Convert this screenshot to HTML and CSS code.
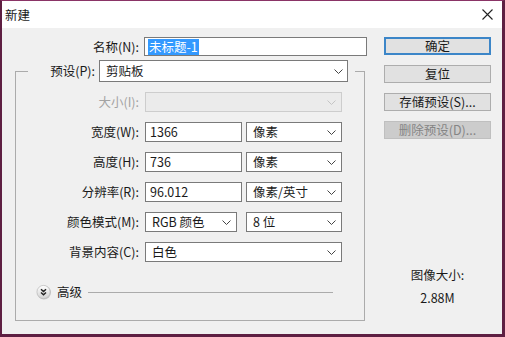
FILE: index.html
```html
<!DOCTYPE html>
<html lang="zh-CN">
<head>
    <meta charset="UTF-8">
    <title>新建</title>
    <link rel="stylesheet" href="styles.css">
</head>
<body>
    <div class="window">
        <div class="titlebar">
            <span class="title">新建</span>
            <svg class="close" width="11" height="11" viewBox="0 0 11 11">
                <path d="M0.5 0.5 L10.5 10.5 M10.5 0.5 L0.5 10.5" stroke="#222" stroke-width="1.1" fill="none"/>
            </svg>
        </div>

        <div class="content">
            <div class="main">
                <!-- nombre -->
                <div class="name-row">
                    <span class="label name-label">名称(N):</span>
                    <div class="field name-field"><span class="selected">未标题-1</span></div>
                </div>

                <fieldset class="group">
                    <legend>
                        <div class="legend-row">
                            <span class="label preset-label">预设(P):</span>
                            <div class="field select preset">
                                <span>剪贴板</span>
                                <svg class="chev" width="9" height="5" viewBox="0 0 9 5"><path d="M0.5 0.5 L4.5 4.5 L8.5 0.5" stroke="#444" fill="none"/></svg>
                            </div>
                        </div>
                    </legend>

                    <div class="row disabled">
                        <span class="label">大小(I):</span>
                        <div class="field select full off">
                            <span></span>
                            <svg class="chev" width="9" height="5" viewBox="0 0 9 5"><path d="M0.5 0.5 L4.5 4.5 L8.5 0.5" stroke="#c4c4c4" fill="none"/></svg>
                        </div>
                    </div>

                    <div class="row">
                        <span class="label">宽度(W):</span>
                        <div class="field num">1366</div>
                        <div class="field select unit">
                            <span>像素</span>
                            <svg class="chev" width="9" height="5" viewBox="0 0 9 5"><path d="M0.5 0.5 L4.5 4.5 L8.5 0.5" stroke="#444" fill="none"/></svg>
                        </div>
                    </div>

                    <div class="row">
                        <span class="label">高度(H):</span>
                        <div class="field num">736</div>
                        <div class="field select unit">
                            <span>像素</span>
                            <svg class="chev" width="9" height="5" viewBox="0 0 9 5"><path d="M0.5 0.5 L4.5 4.5 L8.5 0.5" stroke="#444" fill="none"/></svg>
                        </div>
                    </div>

                    <div class="row">
                        <span class="label">分辨率(R):</span>
                        <div class="field num">96.012</div>
                        <div class="field select unit">
                            <span>像素/英寸</span>
                            <svg class="chev" width="9" height="5" viewBox="0 0 9 5"><path d="M0.5 0.5 L4.5 4.5 L8.5 0.5" stroke="#444" fill="none"/></svg>
                        </div>
                    </div>

                    <div class="row">
                        <span class="label">颜色模式(M):</span>
                        <div class="field select mode">
                            <span>RGB 颜色</span>
                            <svg class="chev" width="9" height="5" viewBox="0 0 9 5"><path d="M0.5 0.5 L4.5 4.5 L8.5 0.5" stroke="#444" fill="none"/></svg>
                        </div>
                        <div class="field select unit bits">
                            <span>8 位</span>
                            <svg class="chev" width="9" height="5" viewBox="0 0 9 5"><path d="M0.5 0.5 L4.5 4.5 L8.5 0.5" stroke="#444" fill="none"/></svg>
                        </div>
                    </div>

                    <div class="row">
                        <span class="label">背景内容(C):</span>
                        <div class="field select full">
                            <span>白色</span>
                            <svg class="chev" width="9" height="5" viewBox="0 0 9 5"><path d="M0.5 0.5 L4.5 4.5 L8.5 0.5" stroke="#444" fill="none"/></svg>
                        </div>
                    </div>

                    <!-- avanzado -->
                    <div class="advanced">
                        <svg class="adv-icon" width="16" height="16" viewBox="0 0 16 16">
                            <defs>
                                <linearGradient id="g" x1="0" y1="0" x2="0" y2="1">
                                    <stop offset="0" stop-color="#ffffff"/>
                                    <stop offset="1" stop-color="#d2d2d2"/>
                                </linearGradient>
                            </defs>
                            <circle cx="8" cy="8.5" r="7" fill="#c8c8c8"/>
                            <circle cx="7.5" cy="8" r="6.6" fill="url(#g)" stroke="#b4b4b4" stroke-width="0.6"/>
                            <path d="M5 5.2 L7.5 7.6 L10 5.2 M5 8.4 L7.5 10.8 L10 8.4" stroke="#222" stroke-width="1.4" fill="none"/>
                        </svg>
                        <span class="adv-text">高级</span>
                        <span class="adv-line"></span>
                    </div>
                </fieldset>
            </div>

            <div class="side">
                <div class="btn default">确定</div>
                <div class="btn">复位</div>
                <div class="btn">存储预设(S)...</div>
                <div class="btn off">删除预设(D)...</div>
                <div class="image-size">
                    <div>图像大小:</div>
                    <div class="size-value">2.88M</div>
                </div>
            </div>
        </div>
    </div>
</body>
</html>
```

FILE: styles.css
```css
body {
    margin: 0;
    padding: 0;
    font-family: "Noto Sans CJK SC", sans-serif;
    font-size: 12.5px;
    color: #1a1a1a;
}
.window {
    width: 505px;
    height: 337px;
    box-sizing: border-box;
    border: solid #5e1f42;
    border-width: 1px 3px 3px 2px;
    border-top-color: #8a3466;
    background: #f0f0f0;
    display: flex;
    flex-direction: column;
}
.titlebar {
    height: 27px;
    background: #ffffff;
    display: flex;
    align-items: center;
    justify-content: space-between;
    padding: 0 9px 0 3px;
}
.title {
    line-height: 16px;
}
.close {
    display: block;
}
.content {
    flex: 1;
    display: flex;
}
.main {
    width: 372px;
    padding-top: 9px;
}
.label {
    line-height: 16px;
    text-align: right;
    white-space: nowrap;
}
.field {
    box-sizing: border-box;
    height: 20px;
    background: #ffffff;
    border: 1px solid #7a7a7a;
    display: flex;
    align-items: center;
    padding-left: 4px;
    line-height: 16px;
    white-space: nowrap;
}
.select {
    justify-content: space-between;
    padding: 0 5px 0 6px;
}
.chev {
    display: block;
}

/* nombre */
.name-row {
    display: flex;
    align-items: center;
}
.name-label {
    width: 137px;
    margin-right: 5px;
}
.name-field {
    width: 223px;
    height: 19px;
    padding-left: 3px;
}
.selected {
    background: #3399ff;
    color: #ffffff;
    padding: 0 1px;
}

/* grupo */
.group {
    margin: 4px 0 0 13px;
    width: 350px;
    box-sizing: border-box;
    padding: 0 0 20px 0;
    border: 1px solid #ababab;
    min-width: 0;
}
.group legend {
    margin-left: 12px;
    padding: 0 7px 0 0;
}
.legend-row {
    display: flex;
    align-items: center;
}
.preset-label {
    width: 67px;
    margin-right: 4px;
}
.preset {
    width: 249px;
    height: 22px;
    padding-right: 4px;
}
.row {
    display: flex;
    align-items: center;
    height: 30px;
}
.row:first-of-type {
    margin-top: 5px;
}
.row .label {
    width: 123px;
    margin-right: 6px;
}
.full {
    width: 197px;
}
.num {
    width: 97px;
}
.unit {
    width: 96px;
    margin-left: 4px;
}
.mode {
    width: 92px;
}
.bits {
    margin-left: 9px;
}
.disabled .label {
    color: #a3a3a3;
}
.off.field {
    background: #ebebeb;
    border-color: #cdcdcd;
}

/* avanzado */
.advanced {
    display: flex;
    align-items: center;
    height: 16px;
    margin: 17px 31px 0 20px;
}
.adv-icon {
    display: block;
}
.adv-text {
    margin-left: 5px;
    line-height: 16px;
}
.adv-line {
    flex: 1;
    height: 1px;
    background: #ababab;
    margin-left: 6px;
}

/* botones */
.side {
    width: 107px;
    margin-left: 10px;
    padding-top: 9px;
    display: flex;
    flex-direction: column;
}
.btn {
    box-sizing: border-box;
    height: 18px;
    margin-bottom: 10px;
    background: #e1e1e1;
    border: 1px solid #adadad;
    display: flex;
    align-items: center;
    justify-content: center;
    line-height: 16px;
}
.btn.default {
    border: 2px solid #3c86c8;
}
.btn.off {
    background: #cccccc;
    border-color: #bfbfbf;
    color: #858585;
}
.image-size {
    margin-top: 118px;
    text-align: center;
    line-height: 16px;
}
.size-value {
    margin-top: 7px;
}
```
